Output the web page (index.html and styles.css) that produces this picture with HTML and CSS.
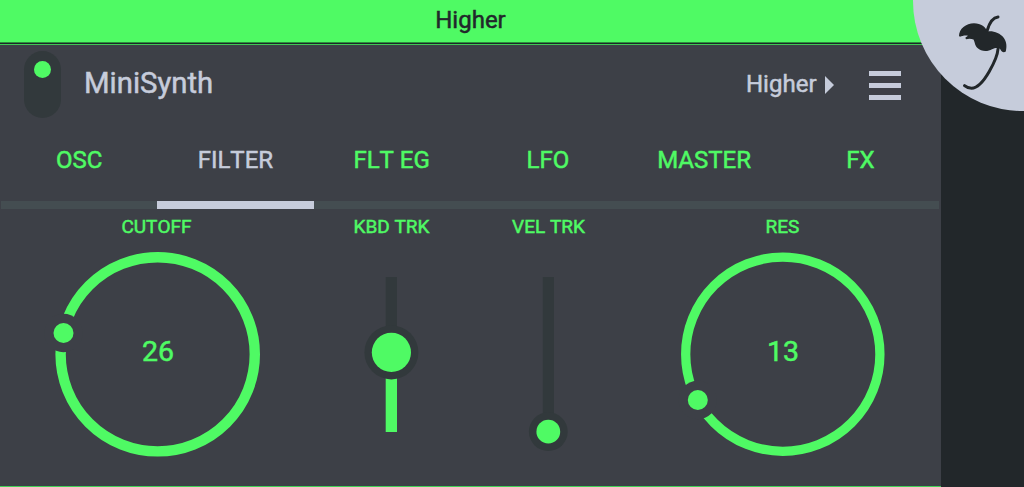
FILE: index.html
```html
<!DOCTYPE html>
<html lang="en">
<head>
<meta charset="utf-8">
<title>MiniSynth</title>
<link rel="stylesheet" href="styles.css">
</head>
<body>
<div class="app">
  <header class="titlebar"><span class="preset-title">Higher</span></header>
  <main class="panel">
    <div class="channel">
      <div class="power"><span class="power-led"></span></div>
      <h1 class="name">MiniSynth</h1>
      <div class="preset">Higher</div>
      <svg class="arrow" width="9" height="18" viewBox="0 0 9 18"><path d="M0 0L9 9L0 18Z"/></svg>
      <div class="menu"><i></i><i></i><i></i></div>
    </div>
    <nav class="tabs">
      <a class="tab">OSC</a>
      <a class="tab active">FILTER</a>
      <a class="tab">FLT EG</a>
      <a class="tab">LFO</a>
      <a class="tab">MASTER</a>
      <a class="tab">FX</a>
    </nav>
    <section class="controls">
      <div class="control wide">
        <span class="label">CUTOFF</span>
        <div class="dial">
          <svg class="drawing" width="313" height="247" viewBox="0 240 313 247">
            <circle class="ring" cx="157.7" cy="354.3" r="97.1" stroke-width="10.4"/>
            <circle class="gap" cx="63.5" cy="333" r="19.2"/>
            <circle class="dot" cx="63.5" cy="333" r="10"/>
          </svg>
          <span class="value">26</span>
        </div>
      </div>
      <div class="control">
        <span class="label">KBD TRK</span>
        <svg class="drawing" width="157" height="247" viewBox="313 240 157 247">
          <path class="track" d="M385.7 277h11.3v75h-11.3z"/>
          <path class="dot" d="M385.7 352h11.3v80h-11.3z"/>
          <circle class="track" cx="391.4" cy="352.4" r="27"/>
          <circle class="dot" cx="391.4" cy="352.4" r="19.6"/>
        </svg>
      </div>
      <div class="control">
        <span class="label">VEL TRK</span>
        <svg class="drawing" width="157" height="247" viewBox="470 240 157 247">
          <path class="track" d="M542.8 277h11.2v155h-11.2z"/>
          <circle class="track" cx="548.3" cy="431.7" r="19.4"/>
          <circle class="dot" cx="548.3" cy="431.7" r="11.9"/>
        </svg>
      </div>
      <div class="control wide last">
        <span class="label">RES</span>
        <div class="dial">
          <svg class="drawing" width="311" height="247" viewBox="627 240 311 247">
            <circle class="ring" cx="782.8" cy="354.2" r="97.1" stroke-width="9.3"/>
            <circle class="gap" cx="697.8" cy="400" r="19.2"/>
            <circle class="dot" cx="697.8" cy="400" r="10"/>
          </svg>
          <span class="value">13</span>
        </div>
      </div>
    </section>
  </main>
  <svg class="corner" width="112" height="112" viewBox="912 0 112 112">
    <circle class="corner-disc" cx="1023" cy="1" r="110"/>
    <path class="fruit" d="M959 36C959 29 966 23.300 974 23.300C981 23.300 986 27.500 987.300 31.500C993 30.500 1000 33 1003.500 37.500C1007 42 1006.800 47 1005.800 51.500C1004 52.800 1001.800 52.500 1000.500 49.500C998.500 47.800 996 47.500 992 49.200C988 51.800 981 51.800 977.500 48C974.500 45 975 42 973.500 39.500C971 38.500 968.500 38.500 966 39.300L965.300 37.800L968 35.800C965 35 962 36 960 36.800Z"/>
    <path class="stalk" d="M987 31C989 24 993 17.500 998 17M998 49C997.500 57 984 88 971.500 88.200C968 88.200 966 87 964.500 85.700"/>
  </svg>
</div>
</body>
</html>
```
FILE: styles.css
```css
* { box-sizing: border-box; }
body { margin: 0; font-family: Roboto, "Liberation Sans", sans-serif; }
.app {
  position: relative;
  display: flex;
  flex-direction: column;
  width: 1024px;
  height: 487px;
  overflow: hidden;
  background: #22272a;
  color: #4ffa64;
  font-kerning: none;
  -webkit-text-stroke: 0.5px currentColor;
}
.titlebar {
  height: 45px;
  flex: none;
  background: linear-gradient(#4ffa64 42px, #2b8f3c 42px, #2b8f3c 43px, #20262a 43px, #20262a 44px, #3fc854 44px);
  width: 941px;
  text-align: center;
  color: #22272b;
  font-size: 24px;
  line-height: 40px;
}
.panel {
  display: flex;
  flex-direction: column;
  width: 940.5px;
  height: 442px;
  background: #3d4047;
  border-bottom: 1px solid #43cf57;
}
.channel { display: flex; height: 73px; flex: none; padding: 6px 0 0 24px; color: #c6ccdb; }
.power { width: 37px; height: 67px; border-radius: 19px; background: #32393c; padding: 10px 0 0 10px; }
.power-led { display: block; width: 17px; height: 17px; border-radius: 50%; background: #4ffa64; }
.name { width: 661px; margin: 0; padding-left: 23px; font-size: 29.3px; font-weight: 400; line-height: 64px; }
.preset { width: 79px; margin-left: 24px; font-size: 24px; line-height: 66px; }
.arrow { margin-top: 25px; fill: #c6ccdb; }
.menu { display: flex; flex-direction: column; gap: 7px; margin: 20px 0 0 35px; }
.menu i { width: 32px; height: 5px; background: #c6ccdb; }
.tabs { display: flex; height: 91px; flex: none; padding: 0 2px 0 1px; }
.tab {
  flex: 1;
  text-align: center;
  border-bottom: 8px solid #444d51;
  font-size: 24px;
  line-height: 84px;
}
.tab.active { color: #c6ccdb; border-color: #c6ccdb; }
.controls { display: flex; height: 277px; }
.control { width: 157px; display: flex; flex-direction: column; align-items: center; }
.control.wide { width: 313px; }
.control.last { width: 311px; }
.label { height: 31px; flex: none; font-size: 19px; line-height: 35px; }
.drawing { display: block; flex: none; }
.dial { display: grid; place-items: center; }
.dial > * { grid-area: 1 / 1; }
.ring { fill: none; stroke: #4ffa64; }
.gap { fill: #3d4047; }
.dot { fill: #4ffa64; }
.track { fill: #32393c; }
.value { font-size: 28.5px; line-height: 34px; padding: 0 0 24px 3px; }
.last .value { padding-left: 1px; }
.corner { position: absolute; top: 0; right: 0; }
.corner-disc { fill: #c6ccdb; }
.fruit { fill: #22272a; }
.stalk { fill: none; stroke: #22272a; stroke-width: 3; stroke-linecap: round; }
```
